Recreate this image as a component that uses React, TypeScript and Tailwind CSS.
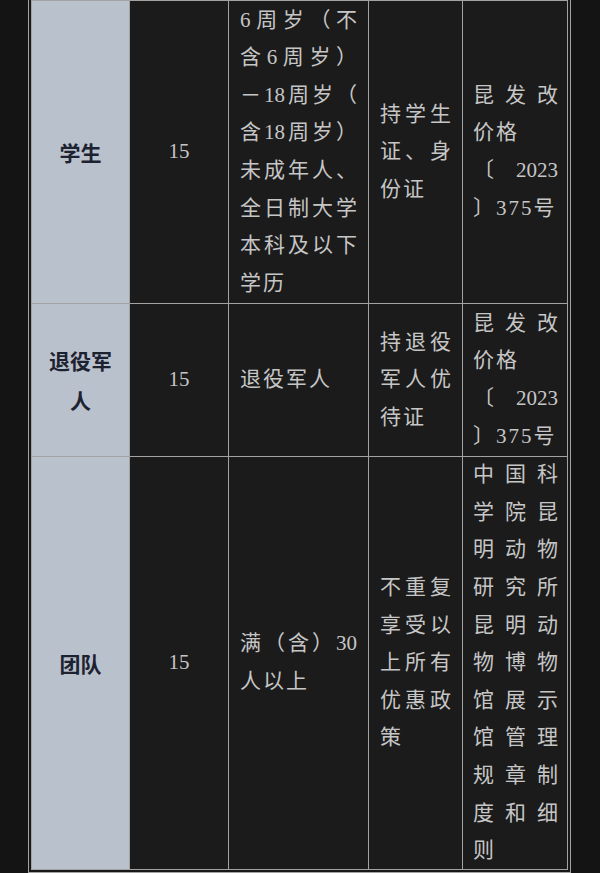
type Line = { t: string; full?: boolean };

const F = (t: string): Line => ({ t, full: true });
const N = (t: string): Line => ({ t });

interface Row {
  name: string[];
  price: string;
  cond: Line[];
  doc: Line[];
  basis: Line[];
}

const rows: Row[] = [
  {
    name: ['学生'],
    price: '15',
    cond: [
      F('6周岁（不'),
      F('含6周岁）'),
      F('－18周岁（'),
      F('含18周岁）'),
      F('未成年人、'),
      F('全日制大学'),
      F('本科及以下'),
      N('学历'),
    ],
    doc: [F('持学生'), F('证、身'), N('份证')],
    basis: [F('昆发改'), N('价格'), F('〔2023'), N('〕375号')],
  },
  {
    name: ['退役军', '人'],
    price: '15',
    cond: [N('退役军人')],
    doc: [F('持退役'), F('军人优'), N('待证')],
    basis: [F('昆发改'), N('价格'), F('〔2023'), N('〕375号')],
  },
  {
    name: ['团队'],
    price: '15',
    cond: [F('满（含）30'), N('人以上')],
    doc: [F('不重复'), F('享受以'), F('上所有'), F('优惠政'), N('策')],
    basis: [
      F('中国科'),
      F('学院昆'),
      F('明动物'),
      F('研究所'),
      F('昆明动'),
      F('物博物'),
      F('馆展示'),
      F('馆管理'),
      F('规章制'),
      F('度和细'),
      N('则'),
    ],
  },
];

function TextLines({ lines }: { lines: Line[] }) {
  return (
    <div className="w-full">
      {lines.map((l, i) =>
        l.full ? (
          <div key={i} className="flex justify-between">
            {(l.t.match(/\d+|./gu) ?? []).map((p, j) => (
              <span key={j}>{p}</span>
            ))}
          </div>
        ) : (
          <div key={i} className="tracking-[2px] whitespace-nowrap">
            {l.t}
          </div>
        )
      )}
    </div>
  );
}

export default function App() {
  return (
    <div className="h-[873px] overflow-hidden bg-[#141414] font-['Liberation_Serif','Noto_Sans_CJK_SC',sans-serif] text-[21px] leading-[37.6px] text-[#c6c6c6]">
      <div className="ml-[28px] -mt-[3px] w-[543px] border border-[#a3a3a3] bg-[#181818] p-[2px]">
        <div className="grid grid-cols-[97px_98px_139px_93px_104px] grid-rows-[302px_152px_412px] gap-px border border-[#a3a3a3] bg-[#a3a3a3]">
          {rows.map((r, i) => (
            <div key={i} className="contents">
              <div className="flex items-center justify-center bg-[#b9c1cd] text-center font-['Noto_Sans_CJK_SC',sans-serif] font-bold leading-[40px] text-[#1d2230]">
                <div>
                  {r.name.map((n) => (
                    <div key={n}>{n}</div>
                  ))}
                </div>
              </div>
              <div className="flex items-center justify-center bg-[#1b1b1b]">{r.price}</div>
              <div className="flex items-center bg-[#1b1b1b] px-[11px]">
                <TextLines lines={r.cond} />
              </div>
              <div className="flex items-center bg-[#1b1b1b] px-[11px]">
                <TextLines lines={r.doc} />
              </div>
              <div className="flex items-center bg-[#1b1b1b] pl-[10px] pr-[9px]">
                <TextLines lines={r.basis} />
              </div>
            </div>
          ))}
        </div>
      </div>
    </div>
  );
}
